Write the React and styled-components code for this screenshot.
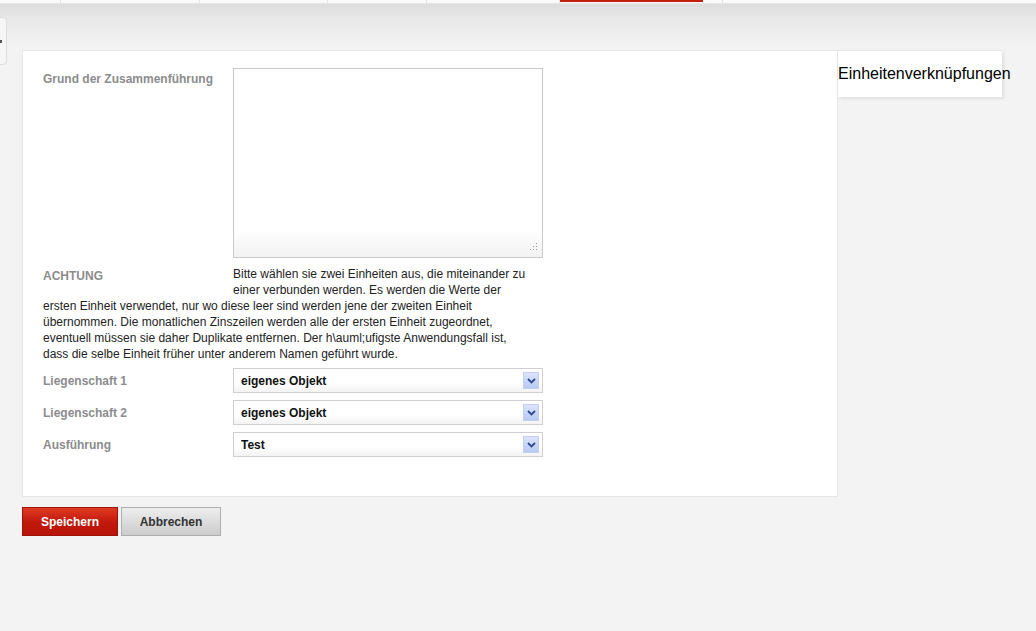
import React from "react";
import styled, { createGlobalStyle } from "styled-components";

const GlobalStyle = createGlobalStyle`
  html, body {
    margin: 0;
    padding: 0;
    background: #f3f3f3;
    font-family: "Liberation Sans", Arial, sans-serif;
    font-size: 12px;
    color: #222;
  }
`;

const tabs = [60, 138, 127, 98, 132, 142, 19];

const App = () => {
  return (
    <>
      <GlobalStyle />
      <Page>
        <TopNav>
          {tabs.map((w, i) => (
            <NavTab key={i} $active={i === 5} style={{ width: w }} />
          ))}
        </TopNav>
        <SideHandle>
          <HandleMark />
        </SideHandle>
        <Main>
          <Layout>
            <Card>
              <Form>
                <Label>Grund der Zusammenführung</Label>
                <TextareaWrap>
                  <Textarea />
                  <Grip>
                    <svg width="8" height="8" viewBox="0 0 8 8">
                      <rect x="6" y="0" width="1" height="1" fill="#999" />
                      <rect x="3" y="3" width="1" height="1" fill="#999" />
                      <rect x="6" y="3" width="1" height="1" fill="#999" />
                      <rect x="0" y="6" width="1" height="1" fill="#999" />
                      <rect x="3" y="6" width="1" height="1" fill="#999" />
                      <rect x="6" y="6" width="1" height="1" fill="#999" />
                    </svg>
                  </Grip>
                </TextareaWrap>

                <Notice>
                  <NoticeLabel>ACHTUNG</NoticeLabel>
                  Bitte wählen sie zwei Einheiten aus, die miteinander zu
                  <br />
                  einer verbunden werden. Es werden die Werte der
                  <br />
                  ersten Einheit verwendet, nur wo diese leer sind werden jene der zweiten Einheit
                  <br />
                  übernommen. Die monatlichen Zinszeilen werden alle der ersten Einheit zugeordnet,
                  <br />
                  eventuell müssen sie daher Duplikate entfernen. Der h\auml;ufigste Anwendungsfall ist,
                  <br />
                  dass die selbe Einheit früher unter anderem Namen geführt wurde.
                </Notice>

                <Label $center>Liegenschaft 1</Label>
                <SelectBox value="eigenes Objekt" />
                <Label $center>Liegenschaft 2</Label>
                <SelectBox value="eigenes Objekt" />
                <Label $center>Ausführung</Label>
                <SelectBox value="Test" />
              </Form>
            </Card>
            <SideTab>Einheitenverknüpfungen</SideTab>
          </Layout>
          <Actions>
            <Button $primary>Speichern</Button>
            <Button>Abbrechen</Button>
          </Actions>
        </Main>
      </Page>
    </>
  );
};

const SelectBox = ({ value }) => (
  <SelectWrap>
    <Select defaultValue={value}>
      <option>{value}</option>
    </Select>
    <Arrow>
      <svg width="9" height="6" viewBox="0 0 9 6">
        <path d="M1 1 L4.5 4.5 L8 1" stroke="#2d4a8a" strokeWidth="1.8" fill="none" />
      </svg>
    </Arrow>
  </SelectWrap>
);

export default App;

const Page = styled.div`
  position: relative;
  min-height: 631px;
  background: linear-gradient(#dcdcdc 3px, #e8e8e8 18px, #f3f3f3 46px, #f3f3f3);
`;

const TopNav = styled.div`
  display: flex;
  height: 3px;
  background: #fafafa;
  border-bottom: 1px solid #e6e6e6;
`;

const NavTab = styled.div`
  height: ${(p) => (p.$active ? "2px" : "3px")};
  background: ${(p) => (p.$active ? "#c41e0d" : "transparent")};
  border-right: 1px solid ${(p) => (p.$active ? "transparent" : "#e2e2e2")};
`;

const SideHandle = styled.div`
  position: absolute;
  left: -4px;
  top: 17px;
  width: 9px;
  height: 46px;
  border: 1px solid #dcdcdc;
  border-radius: 4px;
  background: #f6f6f6;
`;

const HandleMark = styled.div`
  position: absolute;
  left: 3px;
  top: 22px;
  width: 2px;
  height: 3px;
  background: #555;
`;

const Main = styled.div`
  padding: 46px 0 0 22px;
`;

const Layout = styled.div`
  display: flex;
  align-items: flex-start;
`;

const Card = styled.div`
  box-sizing: border-box;
  width: 816px;
  background: #fff;
  border: 1px solid #e6e6e6;
  padding: 17px 0 39px 20px;
`;

const Form = styled.div`
  display: grid;
  grid-template-columns: 190px 310px;
  row-gap: 7px;
  align-items: start;
`;

const Label = styled.div`
  font-weight: bold;
  color: #8c8c8c;
  line-height: 14px;
  padding-top: ${(p) => (p.$center ? "0" : "4px")};
  align-self: ${(p) => (p.$center ? "center" : "start")};
`;

const TextareaWrap = styled.div`
  position: relative;
  height: 190px;
`;

const Textarea = styled.textarea`
  box-sizing: border-box;
  display: block;
  width: 310px;
  height: 190px;
  margin: 0;
  border: 1px solid #c9c9c9;
  background: linear-gradient(#fff 85%, #f2f2f2);
  resize: none;
  outline: none;
  font-family: "Liberation Sans", Arial, sans-serif;
  font-size: 12px;
`;

const Grip = styled.div`
  position: absolute;
  right: 5px;
  bottom: 7px;
  line-height: 0;
`;

const Notice = styled.div`
  grid-column: 1 / -1;
  line-height: 16px;
  color: #222;
  margin: 1px 0 -1px;
`;

const NoticeLabel = styled.div`
  float: left;
  width: 190px;
  height: 32px;
  font-weight: bold;
  color: #8c8c8c;
  padding-top: 3px;
  box-sizing: border-box;
  line-height: 14px;
`;

const SelectWrap = styled.div`
  position: relative;
  height: 25px;
`;

const Select = styled.select`
  appearance: none;
  display: block;
  box-sizing: border-box;
  width: 310px;
  height: 25px;
  margin: 0;
  padding: 0 0 0 7px;
  border: 1px solid #cfcfcf;
  border-radius: 0;
  background: linear-gradient(#fff 60%, #f3f3f3);
  font-family: "Liberation Sans", Arial, sans-serif;
  font-size: 12px;
  font-weight: bold;
  color: #111;
  outline: none;
`;

const Arrow = styled.div`
  position: absolute;
  right: 4px;
  top: 4px;
  width: 16px;
  height: 17px;
  box-sizing: border-box;
  border: 1px solid #c3cff0;
  background: linear-gradient(#dbe4fb, #b9c9f3);
  display: flex;
  align-items: center;
  justify-content: center;
  pointer-events: none;
`;

const SideTab = styled.div`
  width: 164px;
  height: 47px;
  box-sizing: border-box;
  background: #fff;
  border-top: 1px solid #e6e6e6;
  box-shadow: 2px 2px 3px rgba(0, 0, 0, 0.08);
  font-size: 16px;
  color: #000;
  padding-top: 14px;
  white-space: nowrap;
`;

const Actions = styled.div`
  display: flex;
  gap: 3px;
  margin-top: 10px;
`;

const Button = styled.button`
  height: 29px;
  padding: 0;
  width: ${(p) => (p.$primary ? "96px" : "100px")};
  border: 1px solid ${(p) => (p.$primary ? "#9e140a" : "#adadad")};
  background: ${(p) =>
    p.$primary
      ? "linear-gradient(#df3a25, #c0180b 55%, #b8140a)"
      : "linear-gradient(#eeeeee, #d9d9d9 60%, #cccccc)"};
  color: ${(p) => (p.$primary ? "#fff" : "#333")};
  font-family: "Liberation Sans", Arial, sans-serif;
  font-size: 12px;
  font-weight: bold;
  cursor: pointer;
`;
